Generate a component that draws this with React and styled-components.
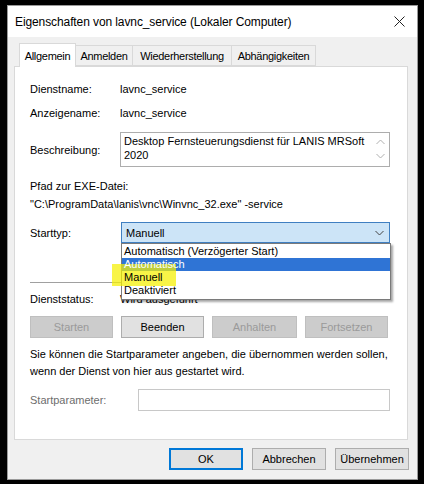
import styled, { createGlobalStyle } from 'styled-components';

const GlobalStyle = createGlobalStyle`
  html, body {
    margin: 0;
    padding: 0;
    background: #000;
  }
  body {
    font-family: 'Liberation Sans', Arial, sans-serif;
    font-size: 11px;
    color: #000;
  }
`;

const Page = styled.div`
  width: 424px;
  height: 484px;
  box-sizing: border-box;
  padding: 5px 6px 4px 7px;
  background: #000;
`;

const Dialog = styled.div`
  width: 411px;
  height: 475px;
  box-sizing: border-box;
  background: #f0f0f0;
  border: 1px solid #9a9a9a;
  display: flex;
  flex-direction: column;
`;

const TitleBar = styled.div`
  height: 31px;
  background: #fff;
  display: flex;
  align-items: center;
  justify-content: space-between;
  padding: 0 12px 0 7px;
  font-size: 12px;
  letter-spacing: -0.1px;
`;

const Body = styled.div`
  padding: 6px 9px 0 6px;
`;

const TabStrip = styled.div`
  display: flex;
  align-items: flex-end;
  height: 23px;
  padding-left: 5px;
`;

const Tab = styled.div`
  box-sizing: border-box;
  width: ${(p) => p.$w}px;
  height: ${(p) => (p.$active ? '24px' : '21px')};
  background: ${(p) => (p.$active ? '#fff' : '#f0f0f0')};
  border: 1px solid #d9d9d9;
  border-bottom: ${(p) => (p.$active ? 'none' : '1px solid #d9d9d9')};
  margin-left: ${(p) => (p.$active ? '0' : '-1px')};
  margin-bottom: ${(p) => (p.$active ? '-1px' : '0')};
  position: relative;
  z-index: ${(p) => (p.$active ? 2 : 1)};
  display: flex;
  align-items: center;
  justify-content: center;
  font-size: 11px;
  letter-spacing: -0.3px;
`;

const Panel = styled.div`
  box-sizing: border-box;
  height: 374px;
  background: #fff;
  border: 1px solid #d9d9d9;
  padding: 0 17px 0 15px;
  display: flex;
  flex-direction: column;
`;

const Row = styled.div`
  display: flex;
  align-items: center;
  height: ${(p) => p.$h || 18}px;
  margin-top: ${(p) => p.$mt || 0}px;
  position: relative;
  z-index: ${(p) => p.$z || 'auto'};
  color: ${(p) => (p.$muted ? '#6d6d6d' : '#000')};
`;

const Label = styled.div`
  width: 90px;
  flex: none;
  color: inherit;
`;

const LabelWide = styled(Label)`
  width: 108px;
`;

const Value = styled.div`
  white-space: nowrap;
`;

const TextArea = styled.div`
  flex: 1;
  height: 35px;
  box-sizing: border-box;
  border: 1px solid #adadad;
  padding: 1px 22px 0 3px;
  line-height: 14px;
  position: relative;
  background: #fff;
`;

const ScrollArrows = styled.div`
  position: absolute;
  right: 4px;
  top: 6px;
  display: flex;
  flex-direction: column;
  gap: 8px;
`;

const ComboWrap = styled.div`
  flex: 1;
  position: relative;
  margin-left: 1px;
`;

const Combo = styled.div`
  height: 21px;
  box-sizing: border-box;
  background: #cce4f7;
  border: 1px solid #3f7fc1;
  display: flex;
  align-items: center;
  justify-content: space-between;
  padding: 0 5px 0 4px;
`;

const DropList = styled.div`
  position: absolute;
  left: 0;
  right: -1px;
  top: 21px;
  z-index: 10;
  background: #fff;
  border: 1px solid #7a7a7a;
  box-shadow: 2px 2px 2px rgba(0, 0, 0, 0.35);
  padding: 1px 0 2px;
`;

const DropItem = styled.div`
  height: 13px;
  line-height: 13px;
  padding-left: 2px;
  background: ${(p) => (p.$selected ? '#2f74d5' : 'transparent')};
  color: ${(p) => (p.$selected ? '#fff' : '#000')};
  & > span {
    position: relative;
    z-index: 2;
  }
`;

const Highlight = styled.div`
  position: absolute;
  left: -10px;
  top: 20px;
  width: 64px;
  height: 22px;
  background: rgba(245, 240, 0, 0.72);
  z-index: 1;
`;

const Separator = styled.div`
  height: 1px;
  background: #a0a0a0;
  margin-top: 39px;
`;

const ButtonRow = styled.div`
  display: flex;
  gap: 8px;
  margin-top: 8px;
`;

const Button = styled.div`
  box-sizing: border-box;
  width: ${(p) => p.$w || 83}px;
  height: 22px;
  display: flex;
  align-items: center;
  justify-content: center;
  background: ${(p) => (p.$disabled ? '#cccccc' : '#e1e1e1')};
  color: ${(p) => (p.$disabled ? '#9a9a9a' : '#000')};
  border: ${(p) =>
    p.$default ? '2px solid #0078d7' : p.$disabled ? '1px solid #bfbfbf' : '1px solid #adadad'};
`;

const Info = styled.div`
  margin-top: 8px;
  line-height: 17px;
`;

const Input = styled.div`
  flex: 1;
  height: 22px;
  box-sizing: border-box;
  border: 1px solid #c8c8c8;
  background: #fff;
`;

const Footer = styled.div`
  display: flex;
  justify-content: flex-end;
  gap: 9px;
  padding: 8px 8px 0 0;
`;

const Chevron = ({ up, color = '#606060' }) => (
  <svg width="9" height="6" viewBox="0 0 9 6">
    <path
      d={up ? 'M0.5 5 L4.5 1 L8.5 5' : 'M0.5 1 L4.5 5 L8.5 1'}
      fill="none"
      stroke={color}
      strokeWidth="1"
    />
  </svg>
);

const CloseIcon = () => (
  <svg width="11" height="11" viewBox="0 0 11 11">
    <path d="M0.5 0.5 L10.5 10.5 M10.5 0.5 L0.5 10.5" stroke="#222" strokeWidth="1" />
  </svg>
);

export default function App() {
  return (
    <>
      <GlobalStyle />
      <Page>
        <Dialog>
          <TitleBar>
            <span>Eigenschaften von lavnc_service (Lokaler Computer)</span>
            <CloseIcon />
          </TitleBar>
          <Body>
            <TabStrip>
              <Tab $active $w={57}>Allgemein</Tab>
              <Tab $w={58}>Anmelden</Tab>
              <Tab $w={100}>Wiederherstellung</Tab>
              <Tab $w={85}>Abhängigkeiten</Tab>
            </TabStrip>
            <Panel>
              <Row $mt={13}>
                <Label>Dienstname:</Label>
                <Value>lavnc_service</Value>
              </Row>
              <Row $mt={6}>
                <Label>Anzeigename:</Label>
                <Value>lavnc_service</Value>
              </Row>
              <Row $h={35} $mt={10}>
                <Label>Beschreibung:</Label>
                <TextArea>
                  Desktop Fernsteuerungsdienst für LANIS MRSoft 2020
                  <ScrollArrows>
                    <Chevron up color="#b0b0b0" />
                    <Chevron color="#b0b0b0" />
                  </ScrollArrows>
                </TextArea>
              </Row>
              <Row $mt={10}>
                <Value>Pfad zur EXE-Datei:</Value>
              </Row>
              <Row $mt={0}>
                <Value>"C:\ProgramData\lanis\vnc\Winvnc_32.exe" -service</Value>
              </Row>
              <Row $h={21} $mt={9} $z={5}>
                <Label>Starttyp:</Label>
                <ComboWrap>
                  <Combo>
                    <span>Manuell</span>
                    <Chevron color="#444" />
                  </Combo>
                  <DropList>
                    <DropItem>
                      <span>Automatisch (Verzögerter Start)</span>
                    </DropItem>
                    <DropItem $selected>
                      <span>Automatisch</span>
                    </DropItem>
                    <DropItem>
                      <span>Manuell</span>
                    </DropItem>
                    <DropItem>
                      <span>Deaktiviert</span>
                    </DropItem>
                    <Highlight />
                  </DropList>
                </ComboWrap>
              </Row>
              <Separator />
              <Row $mt={7}>
                <Label>Dienststatus:</Label>
                <Value>Wird ausgeführt</Value>
              </Row>
              <ButtonRow>
                <Button $disabled>Starten</Button>
                <Button>Beenden</Button>
                <Button $disabled $w={85}>Anhalten</Button>
                <Button $disabled>Fortsetzen</Button>
              </ButtonRow>
              <Info>
                Sie können die Startparameter angeben, die übernommen werden sollen,
                <br />
                wenn der Dienst von hier aus gestartet wird.
              </Info>
              <Row $h={22} $mt={9} $muted>
                <LabelWide>Startparameter:</LabelWide>
                <Input />
              </Row>
            </Panel>
          </Body>
          <Footer>
            <Button $default $w={74}>OK</Button>
            <Button $w={74}>Abbrechen</Button>
            <Button $w={74}>Übernehmen</Button>
          </Footer>
        </Dialog>
      </Page>
    </>
  );
}
